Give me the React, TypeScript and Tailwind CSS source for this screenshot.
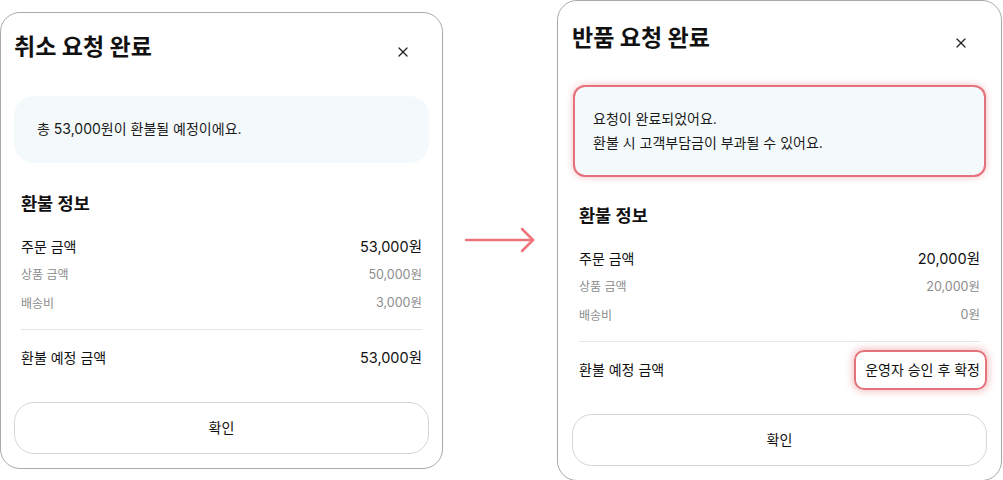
import { X } from "lucide-react";

type Modal = {
  title: string;
  notice: string[];
  order: string;
  product: string;
  shipping: string;
  expected: string;
  highlight?: boolean;
};

const modals: Modal[] = [
  {
    title: "취소 요청 완료",
    notice: ["총 53,000원이 환불될 예정이에요."],
    order: "53,000원",
    product: "50,000원",
    shipping: "3,000원",
    expected: "53,000원",
  },
  {
    title: "반품 요청 완료",
    notice: ["요청이 완료되었어요.", "환불 시 고객부담금이 부과될 수 있어요."],
    order: "20,000원",
    product: "20,000원",
    shipping: "0원",
    expected: "운영자 승인 후 확정",
    highlight: true,
  },
];

function RefundModal({ m }: { m: Modal }) {
  return (
    <div
      className={
        m.highlight
          ? "w-[445px] rounded-[20px] border border-[#a9a9a9] bg-white px-[14px] pt-[23px] pb-[14px]"
          : "w-[443px] rounded-[20px] border border-[#a9a9a9] bg-white px-[13px] pt-[20px] pb-[14px]"
      }
    >
      {/* header */}
      <div className="flex items-center justify-between h-[28px]">
        <h2 className="text-[23px] leading-[28px] font-bold text-[#111]">{m.title}</h2>
        <button className="mt-[10px] mr-[14px] w-[24px] h-[24px] flex items-center justify-center text-[#222]">
          <X size={16} strokeWidth={1.8} />
        </button>
      </div>

      {/* notice box */}
      {m.highlight ? (
        <div className="mt-[35px] mx-[3px] rounded-[10px] bg-[#f4f9fc] px-[18px] py-[20px] outline-[2.5px] outline-solid outline-[#e5727b] shadow-[0_0_7px_2px_rgba(229,114,123,0.45)]">
          {m.notice.map((line) => (
            <p key={line} className="text-[14px] leading-[24px] text-[#1a1a1a]">
              {line}
            </p>
          ))}
        </div>
      ) : (
        <div className="mt-[35px] h-[67px] flex items-center rounded-[20px] bg-[#f4f9fc] px-[23px]">
          <p className="text-[14px] leading-[20px] text-[#1a1a1a]">{m.notice[0]}</p>
        </div>
      )}

      {/* refund info */}
      <div className="px-[7px]">
        <h3 className="mt-[29px] text-[17.5px] leading-[24px] font-semibold text-[#111]">환불 정보</h3>

        <div className="mt-[17px] h-[28px] flex items-center justify-between text-[#111]">
          <span className="text-[14px]">주문 금액</span>
          <span className="text-[14.5px]">{m.order}</span>
        </div>
        <div className="h-[29px] flex items-center justify-between text-[#8c8c8c]">
          <span className="text-[12px]">상품 금액</span>
          <span className="text-[12.5px]">{m.product}</span>
        </div>
        <div className="h-[28px] flex items-center justify-between text-[#8c8c8c]">
          <span className="text-[12px]">배송비</span>
          <span className="text-[12.5px]">{m.shipping}</span>
        </div>

        <div className="mt-[11px] border-t border-[#e6e6e6]" />

        <div className="mt-[14px] h-[28px] flex items-center justify-between text-[#111]">
          <span className="text-[14px]">환불 예정 금액</span>
          {m.highlight ? (
            <span className="-mr-[7px] rounded-[10px] border-[2.5px] border-[#e5727b] pl-[9px] pr-[5px] py-[8px] text-[14px] leading-[20px] shadow-[0_0_7px_2px_rgba(229,114,123,0.4)]">
              {m.expected}
            </span>
          ) : (
            <span className="text-[14.5px]">{m.expected}</span>
          )}
        </div>
      </div>

      <button className="mt-[30px] w-full h-[52px] rounded-[20px] border border-[#d6d6d6] bg-white text-[14px] text-[#111]">
        확인
      </button>
    </div>
  );
}

export default function App() {
  return (
    <div
      className="w-[1003px] h-[480px] bg-white flex items-center"
      style={{ fontFamily: "Inter, 'Noto Sans CJK KR', sans-serif" }}
    >
      <RefundModal m={modals[0]} />
      <div className="mx-[22px] flex items-center">
        <svg width="70" height="26" viewBox="0 0 70 26" fill="none">
          <path d="M1 13H68" stroke="#ef737b" strokeWidth="2.5" strokeLinecap="round" />
          <path d="M57 2L68 13L57 24" stroke="#ef737b" strokeWidth="2.5" strokeLinecap="round" strokeLinejoin="round" />
        </svg>
      </div>
      <RefundModal m={modals[1]} />
    </div>
  );
}
